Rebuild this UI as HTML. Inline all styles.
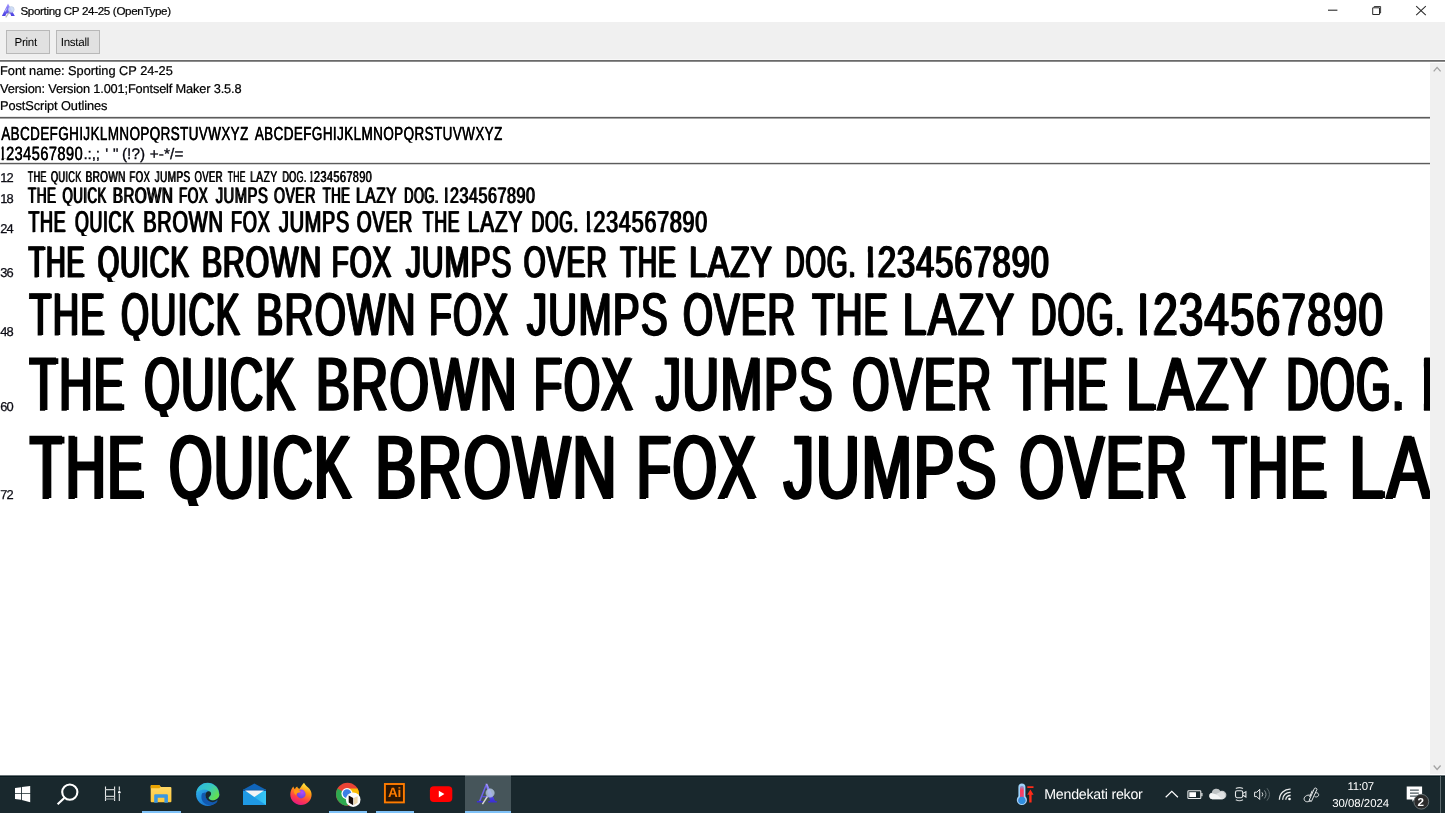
<!DOCTYPE html>
<html lang="en">
<head>
<meta charset="utf-8">
<title>Sporting CP 24-25 (OpenType)</title>
<style>
html,body{margin:0;padding:0;}
body{width:1445px;height:813px;overflow:hidden;background:#fff;position:relative;font-family:"Liberation Sans",sans-serif;color:#000;}
.abs{position:absolute;}
#titlebar{position:absolute;left:0;top:0;width:1445px;height:22px;background:#fff;will-change:transform;}
#title{position:absolute;left:20.4px;top:3.4px;font-size:11.6px;line-height:15px;letter-spacing:-0.33px;white-space:nowrap;color:#000;-webkit-text-stroke:0.2px #000;}
#toolbar{position:absolute;left:0;top:22px;width:1445px;height:37px;background:#f0f0f0;will-change:transform;}
.btn{position:absolute;top:8px;height:22px;width:42px;border:1px solid #b8b8b8;background:#e1e1e1;box-sizing:content-box;font-size:11.6px;line-height:24px;text-align:left;letter-spacing:-0.3px;color:#000;text-rendering:geometricPrecision;}
#rule0a{position:absolute;left:0;top:59px;width:1445px;height:1px;background:#f9f9f9;}
#rule0{position:absolute;left:0;top:60px;width:1445px;height:1px;background:#696969;}
#rule0b{position:absolute;left:0;top:61px;width:1445px;height:1px;background:#8c8c8c;}
#content{position:absolute;left:0;top:62px;width:1430px;height:713px;overflow:hidden;background:#fff;will-change:transform;}
.info{position:absolute;left:0;white-space:nowrap;font-size:12.8px;line-height:17px;color:#000;text-rendering:geometricPrecision;-webkit-text-stroke:0.22px #000;}
.rule{position:absolute;left:0;width:1430px;}
.lbl{position:absolute;left:0.3px;white-space:nowrap;font-size:12.9px;line-height:14px;color:#0c0c14;letter-spacing:-0.9px;text-rendering:geometricPrecision;-webkit-text-stroke:0.25px #0c0c14;}
.ln{position:absolute;left:0;top:0;white-space:nowrap;font-weight:normal;color:#000;text-rendering:geometricPrecision;}
.ln span{position:absolute;top:0;display:block;line-height:1;transform-origin:0 0;white-space:nowrap;clip-path:inset(-0.2em -0.2em 0.07em -0.2em);}
.ln span.dg::first-letter{letter-spacing:-0.03em;}
.pun{position:absolute;white-space:nowrap;line-height:1;color:#06060f;text-rendering:geometricPrecision;-webkit-text-stroke:0.3px #06060f;}
#scroll{position:absolute;left:1430px;top:63px;width:15px;height:711px;background:#f0f0f0;}
#taskbar{position:absolute;left:0;top:775px;width:1445px;height:38px;background:#19282d;will-change:transform;}
#taskbar .edge{position:absolute;left:0;top:0;width:1445px;height:1px;background:#13232a;}
.ind{position:absolute;top:36px;height:2px;background:#7fc2f8;}
.tb-text{position:absolute;color:#fff;white-space:nowrap;}
svg{position:absolute;overflow:visible;}
</style>
</head>
<body>
<div id="content" style="top:0;height:775px">
<div class="info" style="top:62px;letter-spacing:-0.02px">Font name: Sporting CP 24-25</div>
<div class="info" style="top:80px;letter-spacing:-0.16px">Version: Version 1.001;Fontself Maker 3.5.8</div>
<div class="info" style="top:97px;letter-spacing:-0.08px">PostScript Outlines</div>
<div class="rule" style="top:116px;height:1px;background:#e9e9e9"></div>
<div class="rule" style="top:117px;height:1px;background:#5c5c5c"></div>
<div class="rule" style="top:118px;height:1px;background:#a6a6a6"></div>
<div class="rule" style="top:162px;height:1px;background:#e2e2e2"></div>
<div class="rule" style="top:163px;height:1px;background:#5c5c5c"></div>
<div class="rule" style="top:164px;height:1px;background:#d2d2d2"></div>

<div class="ln" style="top:125.01px;font-size:18.86px;letter-spacing:0.57px;-webkit-text-stroke:0.32px #000"><span style="left:1px;transform:translateX(0.18px) scaleX(0.7129);text-shadow:0.44px 0 0 #000">ABCDEFGHIJKLMNOPQRSTUVWXYZ</span> <span style="left:254px;transform:translateX(0.64px) scaleX(0.7146);text-shadow:0.44px 0 0 #000">ABCDEFGHIJKLMNOPQRSTUVWXYZ</span></div>
<div class="ln" style="top:145.00px;font-size:19.11px;letter-spacing:0.57px;-webkit-text-stroke:0.30px #000"><span class="dg" style="left:-2px;transform:translateX(0.19px) scaleX(0.7649);text-shadow:0.41px 0 0 #000;clip-path:polygon(4.51px -5.73px,229.33px -5.73px,229.33px 17.77px,10.43px 17.77px,10.43px 13.18px,7.15px 13.18px,7.15px 17.77px,4.51px 17.77px)">1234567890</span></div>
<div><span class="pun" style="left:83.4px;top:147px;font-size:15.3px;letter-spacing:-0.1px">.:,;</span> <span class="pun" style="left:105.3px;top:147px;font-size:15.3px;letter-spacing:0px">'</span> <span class="pun" style="left:113.1px;top:147px;font-size:15.3px;letter-spacing:0px">&quot;</span> <span class="pun" style="left:121.9px;top:147px;font-size:15.3px;letter-spacing:0.1px">(!?)</span> <span class="pun" style="left:149.7px;top:147px;font-size:15.3px;letter-spacing:0.15px">+-*/=</span></div>
<div class="lbl" style="top:171px">12</div>
<div class="ln" style="top:169.94px;font-size:15.61px;letter-spacing:0.47px;-webkit-text-stroke:0.01px #000"><span style="left:27px;transform:translateX(0.42px) scaleX(0.5797);text-shadow:1.20px 0 0 #000">THE</span> <span style="left:50px;transform:translateX(0.49px) scaleX(0.5965);text-shadow:1.17px 0 0 #000">QUICK</span> <span style="left:85px;transform:translateX(0.22px) scaleX(0.6445);text-shadow:1.08px 0 0 #000">BROWN</span> <span style="left:129px;transform:translateX(0.12px) scaleX(0.6197);text-shadow:1.13px 0 0 #000">FOX</span> <span style="left:154px;transform:translateX(0.29px) scaleX(0.6485);text-shadow:1.08px 0 0 #000">JUMPS</span> <span style="left:194px;transform:translateX(0.16px) scaleX(0.6147);text-shadow:1.14px 0 0 #000">OVER</span> <span style="left:227px;transform:translateX(0.39px) scaleX(0.5511);text-shadow:1.27px 0 0 #000">THE</span> <span style="left:249px;transform:translateX(0.71px) scaleX(0.6722);text-shadow:1.04px 0 0 #000">LAZY</span> <span style="left:281px;transform:translateX(0.94px) scaleX(0.5845);text-shadow:1.19px 0 0 #000">DOG.</span> <span class="dg" style="left:307px;transform:translateX(0.80px) scaleX(0.7067);text-shadow:0.99px 0 0 #000;clip-path:polygon(3.77px -4.68px,187.33px -4.68px,187.33px 14.52px,8.61px 14.52px,8.61px 10.70px,6.40px 10.70px,6.40px 14.52px,3.77px 14.52px)">1234567890</span></div>
<div class="lbl" style="top:192px">18</div>
<div class="ln" style="top:184.91px;font-size:22.42px;letter-spacing:0.67px;-webkit-text-stroke:0.23px #000"><span style="left:27px;transform:translateX(0.53px) scaleX(0.6079);text-shadow:1.79px 0 0 #000">THE</span> <span style="left:61px;transform:translateX(0.95px) scaleX(0.5973);text-shadow:1.82px 0 0 #000">QUICK</span> <span style="left:112px;transform:translateX(0.36px) scaleX(0.6768);text-shadow:1.60px 0 0 #000">BROWN</span> <span style="left:178px;transform:translateX(0.49px) scaleX(0.6088);text-shadow:1.78px 0 0 #000">FOX</span> <span style="left:215px;transform:translateX(0.15px) scaleX(0.6634);text-shadow:1.64px 0 0 #000">JUMPS</span> <span style="left:273px;transform:translateX(0.42px) scaleX(0.6335);text-shadow:1.71px 0 0 #000">OVER</span> <span style="left:322px;transform:translateX(0.24px) scaleX(0.5881);text-shadow:1.85px 0 0 #000">THE</span> <span style="left:355px;transform:translateX(0.61px) scaleX(0.6973);text-shadow:1.56px 0 0 #000">LAZY</span> <span style="left:403px;transform:translateX(0.72px) scaleX(0.5762);text-shadow:1.89px 0 0 #000">DOG.</span> <span class="dg" style="left:441px;transform:translateX(0.00px) scaleX(0.7228);text-shadow:1.50px 0 0 #000;clip-path:polygon(5.38px -6.73px,269.08px -6.73px,269.08px 20.85px,12.33px 20.85px,12.33px 15.70px,9.34px 15.70px,9.34px 20.85px,5.38px 20.85px)">1234567890</span></div>
<div class="lbl" style="top:222px">24</div>
<div class="ln" style="top:207.97px;font-size:30.21px;letter-spacing:0.91px;-webkit-text-stroke:0.53px #000"><span style="left:27px;transform:translateX(0.94px) scaleX(0.6013);text-shadow:1.69px 0 0 #000">THE</span> <span style="left:74px;transform:translateX(0.46px) scaleX(0.5966);text-shadow:1.71px 0 0 #000">QUICK</span> <span style="left:142px;transform:translateX(0.65px) scaleX(0.6685);text-shadow:1.52px 0 0 #000">BROWN</span> <span style="left:230px;transform:translateX(0.46px) scaleX(0.6105);text-shadow:1.67px 0 0 #000">FOX</span> <span style="left:278px;transform:translateX(0.56px) scaleX(0.6629);text-shadow:1.54px 0 0 #000">JUMPS</span> <span style="left:356px;transform:translateX(0.37px) scaleX(0.6292);text-shadow:1.62px 0 0 #000">OVER</span> <span style="left:422px;transform:translateX(0.20px) scaleX(0.5956);text-shadow:1.71px 0 0 #000">THE</span> <span style="left:467px;transform:translateX(0.34px) scaleX(0.6988);text-shadow:1.46px 0 0 #000">LAZY</span> <span style="left:531px;transform:translateX(0.11px) scaleX(0.5850);text-shadow:1.74px 0 0 #000">DOG.</span> <span class="dg" style="left:581px;transform:translateX(0.59px) scaleX(0.7185);text-shadow:1.42px 0 0 #000;clip-path:polygon(7.19px -9.06px,362.51px -9.06px,362.51px 28.09px,16.55px 28.09px,16.55px 21.39px,12.05px 21.39px,12.05px 28.09px,7.19px 28.09px)">1234567890</span></div>
<div class="lbl" style="top:266px">36</div>
<div class="ln" style="top:241.00px;font-size:43.98px;letter-spacing:1.32px;-webkit-text-stroke:0.87px #000"><span style="left:27px;transform:translateX(0.82px) scaleX(0.6206);text-shadow:2.68px 0 0 #000">THE</span> <span style="left:97px;transform:translateX(0.08px) scaleX(0.6307);text-shadow:2.64px 0 0 #000">QUICK</span> <span style="left:201px;transform:translateX(0.27px) scaleX(0.6870);text-shadow:2.42px 0 0 #000">BROWN</span> <span style="left:330px;transform:translateX(0.93px) scaleX(0.6415);text-shadow:2.59px 0 0 #000">FOX</span> <span style="left:405px;transform:translateX(0.23px) scaleX(0.6837);text-shadow:2.43px 0 0 #000">JUMPS</span> <span style="left:522px;transform:translateX(0.96px) scaleX(0.6473);text-shadow:2.57px 0 0 #000">OVER</span> <span style="left:619px;transform:translateX(0.58px) scaleX(0.6164);text-shadow:2.70px 0 0 #000">THE</span> <span style="left:688px;transform:translateX(0.62px) scaleX(0.7264);text-shadow:2.29px 0 0 #000">LAZY</span> <span style="left:784px;transform:translateX(0.67px) scaleX(0.6054);text-shadow:2.75px 0 0 #000">DOG.</span> <span class="dg" style="left:860px;transform:translateX(0.06px) scaleX(0.7414);text-shadow:2.24px 0 0 #000;clip-path:polygon(10.48px -13.20px,527.81px -13.20px,527.81px 40.91px,24.12px 40.91px,24.12px 31.56px,17.72px 31.56px,17.72px 40.91px,10.48px 40.91px)">1234567890</span></div>
<div class="lbl" style="top:325px">48</div>
<div class="ln" style="top:284.98px;font-size:59.97px;letter-spacing:1.80px;-webkit-text-stroke:1.15px #000"><span style="left:28px;transform:translateX(0.42px) scaleX(0.6123);text-shadow:3.02px 0 0 #000">THE</span> <span style="left:120px;transform:translateX(0.23px) scaleX(0.6035);text-shadow:3.07px 0 0 #000">QUICK</span> <span style="left:255px;transform:translateX(0.59px) scaleX(0.6717);text-shadow:2.75px 0 0 #000">BROWN</span> <span style="left:428px;transform:translateX(0.16px) scaleX(0.6265);text-shadow:2.95px 0 0 #000">FOX</span> <span style="left:526px;transform:translateX(0.28px) scaleX(0.6682);text-shadow:2.77px 0 0 #000">JUMPS</span> <span style="left:682px;transform:translateX(0.29px) scaleX(0.6405);text-shadow:2.89px 0 0 #000">OVER</span> <span style="left:811px;transform:translateX(0.53px) scaleX(0.6122);text-shadow:3.02px 0 0 #000">THE</span> <span style="left:901px;transform:translateX(0.97px) scaleX(0.7192);text-shadow:2.57px 0 0 #000">LAZY</span> <span style="left:1030px;transform:translateX(0.09px) scaleX(0.5911);text-shadow:3.13px 0 0 #000">DOG.</span> <span class="dg" style="left:1129px;transform:translateX(0.52px) scaleX(0.7298);text-shadow:2.53px 0 0 #000;clip-path:polygon(14.36px -17.99px,719.59px -17.99px,719.59px 55.77px,32.95px 55.77px,32.95px 43.40px,23.59px 43.40px,23.59px 55.77px,14.36px 55.77px)">1234567890</span></div>
<div class="lbl" style="top:400px">60</div>
<div class="ln" style="top:347.08px;font-size:75.08px;letter-spacing:2.25px;-webkit-text-stroke:1.60px #000"><span style="left:28px;transform:translateX(0.61px) scaleX(0.6135);text-shadow:4.28px 0 0 #000">THE</span> <span style="left:143px;transform:translateX(0.18px) scaleX(0.6118);text-shadow:4.29px 0 0 #000">QUICK</span> <span style="left:314px;transform:translateX(0.99px) scaleX(0.6754);text-shadow:3.88px 0 0 #000">BROWN</span> <span style="left:532px;transform:translateX(0.67px) scaleX(0.6241);text-shadow:4.20px 0 0 #000">FOX</span> <span style="left:654px;transform:translateX(0.88px) scaleX(0.6706);text-shadow:3.91px 0 0 #000">JUMPS</span> <span style="left:851px;transform:translateX(0.36px) scaleX(0.6328);text-shadow:4.15px 0 0 #000">OVER</span> <span style="left:1011px;transform:translateX(0.79px) scaleX(0.6140);text-shadow:4.27px 0 0 #000">THE</span> <span style="left:1125px;transform:translateX(0.24px) scaleX(0.7210);text-shadow:3.64px 0 0 #000">LAZY</span> <span style="left:1285px;transform:translateX(0.29px) scaleX(0.5944);text-shadow:4.41px 0 0 #000">DOG.</span> <span class="dg" style="left:1410px;transform:translateX(0.98px) scaleX(0.7199);text-shadow:3.64px 0 0 #000;clip-path:polygon(17.94px -22.52px,900.94px -22.52px,900.94px 69.82px,41.21px 69.82px,41.21px 54.51px,30.06px 54.51px,30.06px 69.82px,17.94px 69.82px)">1234567890</span></div>
<div class="lbl" style="top:488px">72</div>
<div class="ln" style="top:423.01px;font-size:89.21px;letter-spacing:2.68px;-webkit-text-stroke:1.95px #000"><span style="left:28px;transform:translateX(0.75px) scaleX(0.6238);text-shadow:4.83px 0 0 #000">THE</span> <span style="left:167px;transform:translateX(0.88px) scaleX(0.6214);text-shadow:4.85px 0 0 #000">QUICK</span> <span style="left:374px;transform:translateX(0.13px) scaleX(0.6835);text-shadow:4.41px 0 0 #000">BROWN</span> <span style="left:635px;transform:translateX(0.40px) scaleX(0.6334);text-shadow:4.76px 0 0 #000">FOX</span> <span style="left:782px;transform:translateX(0.84px) scaleX(0.6782);text-shadow:4.44px 0 0 #000">JUMPS</span> <span style="left:1018px;transform:translateX(0.29px) scaleX(0.6429);text-shadow:4.69px 0 0 #000">OVER</span> <span style="left:1211px;transform:translateX(0.50px) scaleX(0.6227);text-shadow:4.84px 0 0 #000">THE</span> <span style="left:1348px;transform:translateX(0.20px) scaleX(0.7246);text-shadow:4.16px 0 0 #000">LAZY</span> <span style="left:1544px;transform:translateX(0.24px) scaleX(0.5932);text-shadow:5.08px 0 0 #000">DOG.</span> <span class="dg" style="left:1695px;transform:translateX(0.34px) scaleX(0.7292);text-shadow:4.13px 0 0 #000;clip-path:polygon(21.32px -26.76px,1070.53px -26.76px,1070.53px 82.97px,48.98px 82.97px,48.98px 64.93px,35.52px 64.93px,35.52px 82.97px,21.32px 82.97px)">1234567890</span></div>
</div>
<div id="titlebar">
<svg style="left:0;top:0" width="20" height="22" viewBox="0 0 20 22"><defs><linearGradient id="gA2" x1="0" y1="0" x2="0" y2="1"><stop offset="0" stop-color="#a99eff"/><stop offset="0.5" stop-color="#7468f2"/><stop offset="1" stop-color="#4a3fe0"/></linearGradient></defs><path d="M8 3.6 L1.9 15.9 H5.3 L6.5 13.5 H10.2 L11.2 15.9 H14.8 Z" fill="url(#gA2)"/><path d="M6.6 8.6 L5.2 11.6" stroke="#e4e6f6" stroke-width="0.8" fill="none"/><circle cx="11.3" cy="9.5" r="2.9" fill="#cbdaf4" fill-opacity="0.9" stroke="#b5c0d8" stroke-width="0.5"/><path d="M9.5 12 L5.7 17.4" stroke="#b4b4b4" stroke-width="1.1" fill="none"/></svg>
<div id="title">Sporting CP 24-25 (OpenType)</div>
<svg style="left:1320px;top:0" width="125" height="22" viewBox="0 0 125 22"><path d="M8 10.2 H17.4" stroke="#2a2a2a" stroke-width="1.1" fill="none"/><path d="M52.7 7.8 H59.5 V14.5 H52.7 Z" stroke="#2a2a2a" stroke-width="1" fill="none"/><path d="M54.2 7.4 V6.5 H60.6 V13 H59.8" stroke="#2a2a2a" stroke-width="0.9" fill="none"/><path d="M96.2 6.1 L105.8 15.1 M105.8 6.1 L96.2 15.1" stroke="#2a2a2a" stroke-width="1.05" fill="none"/></svg>
</div>
<div id="toolbar">
<div class="btn" style="left:6px;text-indent:7.5px">Print</div>
<div class="btn" style="left:56px;text-indent:3.8px">Install</div>
</div>
<div id="rule0a"></div><div id="rule0"></div><div id="rule0b"></div>
<div id="scroll">
<svg style="left:0;top:0" width="15" height="711" viewBox="0 0 15 711"><path d="M3.7 8.4 L7.1 4.4 L10.6 8.4" stroke="#a3a3a3" stroke-width="1.3" fill="none"/><path d="M3.7 702.5 L7.1 706.4 L10.6 702.5" stroke="#a3a3a3" stroke-width="1.3" fill="none"/></svg>
</div>
<div id="taskbar">
<div class="abs" style="left:0;top:0;width:1445px;height:1px;background:#6a7478"></div>
<div class="abs" style="left:0;top:1px;width:1445px;height:1px;background:#07181d"></div>
<div class="abs" style="left:0;top:2px;width:1445px;height:1px;background:#1c2b30"></div>
<div class="abs" style="left:465px;top:0;width:46px;height:36px;background:#46555a"></div>
<div class="abs" style="left:465px;top:0;width:46px;height:1px;background:#8d979a"></div>
<div class="ind" style="left:142px;width:39px"></div>
<div class="ind" style="left:329px;width:38px"></div>
<div class="ind" style="left:376px;width:38px"></div>
<div class="ind" style="left:465px;width:46px"></div>
<div class="abs" style="left:1440px;top:1px;width:1px;height:37px;background:#5d6a6e"></div>
<svg style="left:0;top:0" width="1445" height="38" viewBox="0 775 1445 38">
<defs>
<linearGradient id="gFolder" x1="0" y1="0" x2="0" y2="1"><stop offset="0" stop-color="#ffd96a"/><stop offset="1" stop-color="#ffc93a"/></linearGradient>
<linearGradient id="gEdgeA" x1="0" y1="0" x2="1" y2="1"><stop offset="0" stop-color="#35c1f1"/><stop offset="0.6" stop-color="#1b7fd6"/><stop offset="1" stop-color="#1565c0"/></linearGradient>
<linearGradient id="gEdgeB" x1="0" y1="0" x2="1" y2="0.6"><stop offset="0" stop-color="#2bb7e6"/><stop offset="0.55" stop-color="#37c8c0"/><stop offset="1" stop-color="#63e04e"/></linearGradient>
<linearGradient id="gMail" x1="0" y1="0" x2="1" y2="0"><stop offset="0" stop-color="#1e97e3"/><stop offset="1" stop-color="#36c6f6"/></linearGradient>
<linearGradient id="gFox" x1="0.7" y1="0" x2="0.3" y2="1"><stop offset="0" stop-color="#fff04a"/><stop offset="0.35" stop-color="#ff9a10"/><stop offset="0.7" stop-color="#ff3d4a"/><stop offset="1" stop-color="#e31587"/></linearGradient>
<radialGradient id="gFoxIn" cx="0.6" cy="0.3" r="0.8"><stop offset="0" stop-color="#b44bff"/><stop offset="1" stop-color="#5a45d8"/></radialGradient>
<linearGradient id="gTherm" x1="0" y1="0" x2="0" y2="1"><stop offset="0" stop-color="#7aa7e8"/><stop offset="0.25" stop-color="#ff3b5c"/><stop offset="0.7" stop-color="#e0487a"/><stop offset="1" stop-color="#2f8fe0"/></linearGradient>
<linearGradient id="gA" x1="0" y1="0" x2="0" y2="1"><stop offset="0" stop-color="#a89cff"/><stop offset="0.5" stop-color="#6a5cf0"/><stop offset="1" stop-color="#3a2fd8"/></linearGradient>
</defs>
<!-- start -->
<path d="M15 788 L21 787.15 V793 H15 Z M21.85 787.05 L30.2 786.1 V793 H21.85 Z M15 793.85 H21 V799.75 L15 798.95 Z M21.85 793.85 H30.2 V802.3 L21.85 799.9 Z" fill="#fff"/>
<!-- search -->
<circle cx="69.8" cy="792.1" r="7.6" fill="none" stroke="#fff" stroke-width="2.1"/>
<path d="M64.3 797.9 L57.6 804.3" stroke="#fff" stroke-width="2.1" stroke-linecap="butt" fill="none"/>
<!-- task view -->
<g fill="none" stroke="#e8eaeb" stroke-width="1.1">
<path d="M105.5 786.6 V801.1 M114.6 786.6 V801.1"/>
<path d="M105 789.6 H115 M105 796.4 H115" stroke="#c9cdce" stroke-width="1.3"/>
<path d="M105.5 799 H114.6" stroke="#9aa1a3"/>
<path d="M119.3 786.6 V790.5 M119.3 794 V801.1"/>
</g>
<circle cx="119.3" cy="792.2" r="1.3" fill="#fff"/>
<!-- explorer -->
<path d="M150.7 786 a1 1 0 0 1 1 -1 h7.4 l1.8 2 h9.5 a1 1 0 0 1 1 1 V801.2 a1 1 0 0 1 -1 1 H151.7 a1 1 0 0 1 -1 -1 Z" fill="url(#gFolder)"/>
<path d="M150.7 786 a1 1 0 0 1 1 -1 h7.4 l1.6 1.8 l-1.3 1.4 H150.7 Z" fill="#e9a300"/>
<path d="M154.2 795.2 a1 1 0 0 1 1 -1 h11.7 a1 1 0 0 1 1 1 V802.8 H164.4 V797.7 H157.7 V802.8 H154.2 Z" fill="#3a97e0"/>
<!-- edge -->
<circle cx="207.7" cy="794.3" r="11.6" fill="url(#gEdgeA)"/>
<path d="M196.3 792.5 A11.6 11.6 0 0 1 219.3 794.6 C219.3 798 216.5 800.4 213 800.4 C210 800.4 208 799 208.6 797.6 C210 796.6 210.6 795 210.2 793.4 C209.6 790.6 206.6 789.2 203.2 789.6 C200.2 790 197.6 791.4 196.3 792.5 Z" fill="url(#gEdgeB)"/>
<path d="M202.2 793.2 C200.6 796.6 201.4 801 204.8 803.6 C207.8 805.8 212 805.6 215 803.8 C216.6 802.8 217.6 801.6 217.2 801.2 C216.8 800.8 215.4 802 212.6 802 C208.6 802 205.2 798.6 205.4 794.8 C205.4 793.2 206 792.2 206 792.2 Z" fill="#1259b0"/>
<path d="M205.4 795.2 C205.2 792.8 207 791 209 791.2 C210.8 791.4 211.6 793.2 210.8 795 C210.2 796.2 208.8 796.8 208.6 797.8 C208.4 799.2 210.4 800.4 213 800.4 C214.6 800.4 216 799.8 216.4 799.8 C216.8 799.8 216.8 800.4 216.2 801 C214.6 802.2 212.4 802.4 210.4 801.8 C207.4 800.8 205.6 798.2 205.4 795.2 Z" fill="#19282d"/>
<path d="M213.6 800.3 C216 800 218.2 798.6 219.6 796.2 L220.2 799.6 L217.6 800.6 C216.4 800.2 215 800.2 213.6 800.3 Z" fill="#19282d"/>
<!-- mail -->
<path d="M243 789.7 L254.4 783.4 L266 789.7 Z" fill="#0f64ba"/>
<path d="M243 789.7 H266 V804.4 a0.6 0.6 0 0 1 -0.6 0.6 H243.6 a0.6 0.6 0 0 1 -0.6 -0.6 Z" fill="url(#gMail)"/>
<path d="M243 789.7 L266 804.9 H243.6 a0.6 0.6 0 0 1 -0.6 -0.6 Z" fill="#1f99e4"/>
<path d="M243 789.7 H266 V791 H243 Z" fill="#0b55a8"/>
<path d="M245 790.6 H264 L254.4 797 Z" fill="#f3f3f5"/>
<!-- firefox -->
<path d="M300.9 805 C294.8 805 290.3 800.2 290.3 794.6 C290.3 791 291.6 788.4 293.4 786.4 C293.6 787.6 294.2 788.6 295 789 C295.4 787.6 296.2 786.8 297.2 786.4 C297.4 787.6 298.2 788.6 299.6 788.8 C301 787 302.6 784.2 304 782.8 C305.2 785.4 307.6 786.6 309.2 788.6 C310.8 790.6 311.6 792.6 311.6 794.8 C311.6 800.4 306.8 805 300.9 805 Z" fill="url(#gFox)"/>
<circle cx="301.2" cy="794" r="4.4" fill="url(#gFoxIn)"/>
<path d="M293.8 790.4 C295.6 789.4 298.4 789.6 300.2 790.8 C301 791.4 300.6 792.4 299.4 792.6 C297.6 792.8 296.4 793.6 296 795 C294.6 794.2 293.6 792.4 293.8 790.4 Z" fill="#ff9a14"/>
<!-- chrome -->
<circle cx="347.5" cy="794.2" r="11.5" fill="#ea4335"/>
<path d="M347.5 794.2 L337.5 788.5 A11.5 11.5 0 0 0 347.5 805.7 L353 796 Z" fill="#2da94f"/>
<path d="M347.5 794.2 L353.3 804.2 A11.5 11.5 0 0 0 357.5 788.5 H347.5 Z" fill="#fbbc05"/>
<circle cx="347" cy="793.6" r="5.6" fill="#fff"/>
<circle cx="347" cy="793.6" r="4.3" fill="#3b7fe6"/>
<circle cx="353.2" cy="799.7" r="7.3" fill="#fdfdfd"/>
<path d="M348.7 795.6 L353.2 798 V805.2 L348.7 802.6 Z" fill="#140a08"/>
<path d="M353.8 798 L357.6 796.2 V802.8 L353.8 805 Z" fill="#ecd7ae"/>
<!-- illustrator -->
<rect x="384.9" y="784" width="19" height="18.4" fill="#2e1703" stroke="#ff7c00" stroke-width="1.9"/>
<!-- youtube -->
<rect x="429.9" y="786.2" width="22.4" height="15.7" rx="4" ry="4" fill="#ff0000"/>
<path d="M438.8 790.8 L444.4 794.1 L438.8 797.4 Z" fill="#fff"/>
<!-- font viewer -->
<g>
<path d="M485.5 783.7 H487.3 L495.2 801.2 H490.2 Z" fill="url(#gA)"/>
<path d="M486 785.2 L479.7 801.2" stroke="#6f63ee" stroke-width="1.5" fill="none"/>
<path d="M482.2 796.7 H490.5" stroke="#5b4fe6" stroke-width="1.1" fill="none"/>
<path d="M476.9 801 H482.7 V802.5 H476.9 Z M488.3 801 H496.8 V802.5 H488.3 Z" fill="#3d31d6"/>
<circle cx="490.1" cy="793" r="4.2" fill="#b7c9ea" fill-opacity="0.8" stroke="#9fb0c8" stroke-width="0.6"/>
<path d="M487.4 796.5 L482.4 804.2" stroke="#d9d9d9" stroke-width="1.4" fill="none"/>
</g>
<!-- weather -->
<path d="M1018.4 787 a3.5 3.5 0 0 1 7 0 V796.3 a5.1 5.1 0 1 1 -7 0 Z" fill="#9fd4fb"/>
<path d="M1020 787.6 a1.9 1.9 0 0 1 3.8 0 V797.4 a3.6 3.6 0 1 1 -3.8 0 Z" fill="url(#gTherm)"/>
<circle cx="1021.9" cy="800.2" r="3.5" fill="#2f8fe0"/>
<path d="M1027.3 786.2 H1033.5 V788 H1027.3 Z M1030.4 789.6 L1033.6 794.8 H1031.6 V802.6 H1029.2 V794.8 H1027.2 Z" fill="#ff2b18"/>
<!-- chevron -->
<path d="M1165.7 797.3 L1171.8 791.3 L1177.9 797.3" fill="none" stroke="#fff" stroke-width="1.2"/>
<!-- battery -->
<rect x="1187.9" y="790.7" width="12.9" height="7.8" rx="0.8" fill="none" stroke="#e9ebec" stroke-width="1.1"/>
<rect x="1201.3" y="793" width="1.2" height="3.2" fill="#e9ebec"/>
<rect x="1189.3" y="792.2" width="6.9" height="4.8" fill="#fff"/>
<rect x="1196.2" y="792.2" width="1" height="4.8" fill="#0a1a1f"/>
<!-- cloud -->
<path d="M1212.4 799.2 a3.3 3.3 0 0 1 -0.6 -6.5 a4.6 4.6 0 0 1 8.6 -1.6 a3.4 3.4 0 0 1 1.6 -0.3 a4.2 4.2 0 0 1 0.4 8.4 Z" fill="#bfc3c4"/>
<path d="M1212.4 799.2 a3.3 3.3 0 0 1 -1.4 -6.2 L1222.6 796 a2 2 0 0 1 -0.4 3.2 Z" fill="#f4f5f5"/>
<path d="M1216 794 L1221.4 791.6 a4.2 4.2 0 0 1 3.6 4.2 a3.4 3.4 0 0 1 -2.6 3.4 Z" fill="#dfe1e2"/>
<!-- meet now -->
<g fill="none" stroke="#e6e8e9" stroke-width="1.1">
<rect x="1235.5" y="790.7" width="7.2" height="7" rx="1.6"/>
<path d="M1242.9 793.4 L1245.9 791.6 V797 L1242.9 795.2"/>
<path d="M1235.8 788.6 Q1239.4 786.6 1243 788.6 M1235.8 799.8 Q1239.4 801.8 1243 799.8" stroke="#cfd3d4"/>
</g>
<!-- volume -->
<path d="M1254.6 792.2 H1256.8 L1259.7 789.3 V799.5 L1256.8 796.6 H1254.6 Z" fill="none" stroke="#e9ebec" stroke-width="1"/>
<path d="M1262 792.4 Q1263.6 794.4 1262 796.4" fill="none" stroke="#d6d9da" stroke-width="1"/>
<path d="M1264.4 790.4 Q1267.6 794.4 1264.4 798.4" fill="none" stroke="#8c9598" stroke-width="1"/>
<path d="M1267 788.2 Q1272 794.4 1267 800.6" fill="none" stroke="#59666a" stroke-width="1"/>
<!-- wifi -->
<g fill="none" stroke="#e9ebec" stroke-width="1.3">
<path d="M1279.4 799.8 A10.6 10.6 0 0 1 1290.6 789.2"/>
<path d="M1282.6 799.8 A7.4 7.4 0 0 1 1290.6 792.4"/>
<path d="M1285.8 799.8 A4.4 4.4 0 0 1 1290.6 795.5"/>
</g>
<circle cx="1289.5" cy="799" r="1.3" fill="#fff"/>
<!-- pen -->
<g fill="none" stroke="#e3e6e7" stroke-width="1">
<path d="M1309 800.6 L1314.4 788.4 a1.6 1.6 0 0 1 2.6 0.9 L1311.4 801.4 Z"/>
<path d="M1312.2 790.6 L1309.6 797"/>
<path d="M1311 795.4 C1306.4 794 1303 797.6 1304.4 800.2 C1305.6 802.4 1308.8 802 1310.6 800.6"/>
<path d="M1315 793 C1317.4 792 1319.4 794 1318.4 795.8 C1317.6 797.2 1315.6 797.2 1314.6 796.4"/>
</g>
<!-- action center -->
<path d="M1406.7 786.6 H1422.1 V799.6 H1414.4 L1412.4 801.8 V799.6 H1406.7 Z" fill="#fff"/>
<path d="M1410 790.1 H1418.8 M1410 793.1 H1418.8 M1410 796.1 H1418.8" stroke="#4d5b60" stroke-width="1.2"/>
<circle cx="1421.3" cy="801.7" r="7.4" fill="#2b2b2b" stroke="#6f7a7d" stroke-width="0.9"/>
</svg>
<div class="tb-text" style="left:388px;top:11.3px;font-size:13.6px;line-height:14px;font-weight:bold;color:#ff7c00;letter-spacing:-0.2px;text-rendering:geometricPrecision">Ai</div>
<div class="tb-text" style="left:1044.2px;top:12px;font-size:14.2px;line-height:17px;letter-spacing:-0.22px;text-rendering:geometricPrecision">Mendekati rekor</div>
<div class="tb-text" style="left:1347.4px;top:5px;font-size:11.4px;line-height:14px;letter-spacing:-0.25px;text-rendering:geometricPrecision">11:07</div>
<div class="tb-text" style="left:1332.2px;top:22px;font-size:11.4px;line-height:14px;letter-spacing:0px;text-rendering:geometricPrecision">30/08/2024</div>
<div class="tb-text" style="left:1417.6px;top:20px;font-size:11.6px;line-height:14px;font-weight:bold">2</div>
</div>
</body>
</html>
